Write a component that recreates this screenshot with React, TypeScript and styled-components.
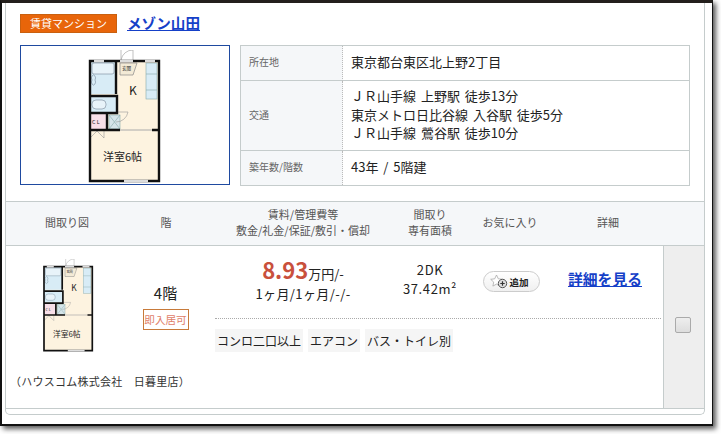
import React from 'react'
import styled, { createGlobalStyle } from 'styled-components'

const GlobalStyle = createGlobalStyle`
  html, body {
    margin: 0;
    padding: 0;
    background: #fff;
    font-family: 'Noto Sans CJK JP', 'Noto Sans', sans-serif;
  }
`

const Screen = styled.div`
  width: 721px;
  height: 434px;
  overflow: hidden;
`

const Window = styled.div`
  box-sizing: border-box;
  width: 713px;
  height: 426px;
  padding: 0 7px 0 3px;
  background: #fff;
  border-top: 3px solid #231f1c;
  border-left: 2px solid #111;
  border-right: 1px solid #111;
  border-bottom: 2px solid #111;
  box-shadow: 3px 3px 5px rgba(0, 0, 0, 0.65);
`

const Panel = styled.div`
  box-sizing: border-box;
  width: 700px;
  height: 412px;
  background: #fff;
  border: 1px solid #c5cccc;
  border-top: 0;
  border-radius: 0 0 5px 5px;
`

const Summary = styled.section`
  box-sizing: border-box;
  height: 198px;
  padding: 10px 14px 0;
`

const TitleRow = styled.div`
  display: flex;
  align-items: center;
  gap: 10px;
  height: 20px;
  margin-bottom: 12px;
`

const TypeBadge = styled.span`
  box-sizing: border-box;
  width: 97px;
  height: 19px;
  background: #e8650a;
  border: 1px solid #c9600f;
  color: #fff;
  font-size: 11px;
  line-height: 17px;
  text-align: center;
`

const NameLink = styled.a`
  color: #1540c8;
  font-size: 14.6px;
  font-weight: 700;
  line-height: 20px;
  text-decoration: underline;
`

const SummaryBody = styled.div`
  display: flex;
  gap: 10px;
`

const PlanBox = styled.div`
  box-sizing: border-box;
  width: 210px;
  height: 140px;
  padding-top: 4px;
  border: 1px solid #1f4aa0;
  display: flex;
  justify-content: center;
  overflow: hidden;
`

const InfoTable = styled.div`
  box-sizing: border-box;
  width: 450px;
  height: 141px;
  border: 1px solid #c5cccc;
  display: grid;
  grid-template-columns: 102px 1fr;
  grid-template-rows: 35px 70px 34px;
`

const InfoLabel = styled.div<{ $last?: boolean }>`
  display: flex;
  align-items: center;
  padding: 0 0 3px 8px;
  background: #f5f7f9;
  color: #666;
  font-size: 10px;
  border-right: 1px dotted #bbb;
  border-bottom: ${props => (props.$last ? '0' : '1px solid #c5cccc')};
`

const InfoValue = styled.div<{ $last?: boolean }>`
  display: flex;
  flex-direction: column;
  justify-content: center;
  padding: 0 0 1px 8px;
  color: #222;
  font-size: 13px;
  line-height: 18.5px;
  word-spacing: 2px;
  border-bottom: ${props => (props.$last ? '0' : '1px solid #c5cccc')};
`

const HeadRow = styled.div`
  display: flex;
  height: 43px;
  background: #f5f7f9;
  border-top: 1px solid #c5cccc;
  border-bottom: 1px solid #c5cccc;
`

const HeadCell = styled.div<{ $width: number }>`
  box-sizing: border-box;
  width: ${props => props.$width}px;
  padding-bottom: 3px;
  display: flex;
  align-items: center;
  justify-content: center;
  color: #555;
  font-size: 11px;
  line-height: 16px;
  text-align: center;
`

const BodyRow = styled.div`
  display: flex;
  height: 162px;
  border-bottom: 1px solid #c5cccc;
`

const PlanColumn = styled.div`
  box-sizing: border-box;
  flex: none;
  width: 120px;
  padding: 13px 0 0 10px;
  display: flex;
  flex-direction: column;
`

const SmallPlan = styled.div`
  width: 63px;
  margin-left: 21px;
  height: 95px;
`

const Company = styled.div`
  margin-top: 20px;
  margin-left: -6px;
  width: 190px;
  color: #333;
  font-size: 11px;
  letter-spacing: 0.25px;
  line-height: 14px;
  white-space: nowrap;
`

const FloorColumn = styled.div`
  box-sizing: border-box;
  flex: none;
  width: 78px;
  padding: 37px 0 0 1px;
  display: flex;
  flex-direction: column;
  align-items: center;
  gap: 6px;
`

const FloorText = styled.div`
  color: #222;
  font-size: 15px;
  line-height: 20px;
`

const MoveInBadge = styled.div`
  box-sizing: border-box;
  width: 46px;
  height: 21px;
  border: 1px solid #c77a3a;
  color: #e0806a;
  font-size: 10.6px;
  line-height: 19px;
  text-align: center;
`

const MainColumn = styled.div`
  box-sizing: border-box;
  flex: none;
  width: 457px;
  padding-left: 11px;
`

const MainTop = styled.div`
  display: flex;
  height: 72px;
  border-bottom: 1px dotted #aaa;
`

const PriceCell = styled.div`
  box-sizing: border-box;
  width: 176px;
  padding-top: 10px;
  text-align: center;
  color: #222;
`

const PriceLine = styled.div`
  height: 26px;
  line-height: 26px;
  font-size: 13px;
`

const PriceValue = styled.span`
  color: #c9503c;
  font-size: 22px;
  font-weight: 700;
`

const TermsLine = styled.div`
  margin-top: 2px;
  font-size: 13px;
  letter-spacing: 0.4px;
  line-height: 20px;
`

const SizeCell = styled.div`
  width: 78px;
  padding-top: 15px;
  text-align: center;
  color: #222;
  font-size: 13px;
  letter-spacing: 0.6px;
  line-height: 18.5px;
  white-space: nowrap;
`

const FavCell = styled.div`
  width: 82px;
  padding: 25px 0 0 1px;
  display: flex;
  justify-content: center;
`

const FavButton = styled.button`
  box-sizing: border-box;
  width: 57px;
  height: 21px;
  padding: 0 0 0 6px;
  display: flex;
  align-items: center;
  gap: 1px;
  background: linear-gradient(#fff, #f0f0f0);
  border: 1px solid #ccc;
  border-radius: 11px;
  color: #222;
  font-family: inherit;
  font-size: 9.6px;
  font-weight: 700;
`

const DetailCell = styled.div`
  width: 106px;
  padding-top: 20px;
  text-align: center;
`

const DetailLink = styled.a`
  color: #1540c8;
  font-size: 14.8px;
  font-weight: 700;
  line-height: 22px;
  text-decoration: underline;
`

const TagRow = styled.div`
  display: flex;
  gap: 5px;
  margin-top: 10px;
`

const Tag = styled.span`
  height: 23px;
  padding: 0 2px;
  background: #f5f5f5;
  color: #222;
  font-size: 12px;
  line-height: 23px;
  white-space: nowrap;
`

const CheckColumn = styled.div`
  box-sizing: border-box;
  flex: none;
  width: 41px;
  margin-left: 2px;
  padding: 0 2px 4px 0;
  background: #eee;
  border-left: 1px solid #c5cccc;
  display: flex;
  align-items: center;
  justify-content: center;
`

const CheckBox = styled.span`
  box-sizing: border-box;
  width: 16px;
  height: 16px;
  border: 1px solid #aaa;
  border-radius: 2px;
  background: linear-gradient(#eee, #ddd);
`

const FloorPlan = ({ width }: { width: number }) => (
  <svg width={width} height={(width * 135) / 90} viewBox="0 0 90 135" style={{ display: 'block' }}>
    <rect x="10" y="11" width="69" height="120" fill="#fdf3e0" />
    <rect x="10" y="11" width="26" height="33" fill="#d8ecf6" />
    <rect x="10" y="47" width="26" height="15" fill="#d8ecf6" />
    <rect x="10" y="64" width="17" height="15" fill="#f8dfe8" />
    <rect x="29" y="65" width="11" height="14" fill="#d5e5ea" stroke="#8aa" strokeWidth="0.6" />
    <path d="M29 65l11 14M40 65l-11 14" stroke="#8aa" strokeWidth="0.6" />
    <rect x="66" y="13" width="11" height="36" fill="#d8ecf6" stroke="#8aa" strokeWidth="0.6" />
    <path d="M66 24h11M66 40h11" stroke="#8aa" strokeWidth="0.6" />
    <rect x="12" y="13" width="22" height="11" rx="2" fill="#e8f3f9" stroke="#789" strokeWidth="0.6" />
    <rect x="12" y="50" width="14" height="9" rx="4" fill="#e8f3f9" stroke="#789" strokeWidth="0.6" />
    <path d="M12 30a2 3 0 1 1 3 0a2 3 0 1 1-3 0" fill="none" stroke="#789" strokeWidth="0.6" />
    <path d="M41 0v10M53 0v10M41 10A12 12 0 0 1 53 0" fill="none" stroke="#999" strokeWidth="0.6" />
    <path d="M40 13h17l-4 12h-13z" fill="#f3ead6" stroke="#888" strokeWidth="0.7" />
    <path d="M36 62h12a12 12 0 0 1-12 10" fill="none" stroke="#999" strokeWidth="0.6" />
    <path d="M10 81v7l7-7M17 81l7 7v-7" fill="none" stroke="#999" strokeWidth="0.6" />
    <path
      d="M10 11v120h69V11ZM36 11v33M10 46h27v17H10M27 63v17M10 80h30M72 80h7"
      fill="none"
      stroke="#111"
      strokeWidth="2.4"
    />
    <path d="M40 80h32" stroke="#aaa" strokeWidth="1" />
    <path d="M14 11h10M40 11h13M65 11h10M44 131h24" stroke="#ddd" strokeWidth="2.4" />
    <text x="42" y="20" fontSize="4.6" fill="#222">玄関</text>
    <text x="49" y="45" fontSize="12" fill="#222">K</text>
    <text x="12" y="74" fontSize="5.4" letterSpacing="1.2" fill="#222">CL</text>
    <text x="23" y="111" fontSize="11" fill="#222">洋室6帖</text>
  </svg>
)

const FavIcon = () => (
  <svg width="19" height="15" viewBox="0 0 19 15">
    <path
      d="M6.5 1l1.8 3.8 4 .5-3 2.8.8 4-3.6-2-3.6 2 .8-4-3-2.8 4-.5z"
      fill="#fff"
      stroke="#aaa"
      strokeWidth="0.8"
    />
    <circle cx="12.5" cy="9.5" r="4.2" fill="#ddd" stroke="#555" strokeWidth="1" />
    <path d="M10.3 9.5h4.4M12.5 7.3v4.4" stroke="#333" strokeWidth="1.2" />
  </svg>
)

const App = () => (
  <Screen>
    <GlobalStyle />
    <Window>
      <Panel>
        <Summary>
          <TitleRow>
            <TypeBadge>賃貸マンション</TypeBadge>
            <NameLink href="#">メゾン山田</NameLink>
          </TitleRow>
          <SummaryBody>
            <PlanBox>
              <FloorPlan width={90} />
            </PlanBox>
            <InfoTable>
              <InfoLabel>所在地</InfoLabel>
              <InfoValue>東京都台東区北上野2丁目</InfoValue>
              <InfoLabel>交通</InfoLabel>
              <InfoValue>
                <div>ＪＲ山手線 上野駅 徒歩13分</div>
                <div>東京メトロ日比谷線 入谷駅 徒歩5分</div>
                <div>ＪＲ山手線 鶯谷駅 徒歩10分</div>
              </InfoValue>
              <InfoLabel $last>築年数/階数</InfoLabel>
              <InfoValue $last>43年 / 5階建</InfoValue>
            </InfoTable>
          </SummaryBody>
        </Summary>
        <HeadRow>
          <HeadCell $width={122}>間取り図</HeadCell>
          <HeadCell $width={76}>階</HeadCell>
          <HeadCell $width={198}>
            賃料/管理費等
            <br />
            敷金/礼金/保証/敷引・償却
          </HeadCell>
          <HeadCell $width={56}>
            間取り
            <br />
            専有面積
          </HeadCell>
          <HeadCell $width={104}>お気に入り</HeadCell>
          <HeadCell $width={92}>詳細</HeadCell>
        </HeadRow>
        <BodyRow>
          <PlanColumn>
            <SmallPlan>
              <FloorPlan width={63} />
            </SmallPlan>
            <Company>（ハウスコム株式会社　日暮里店）</Company>
          </PlanColumn>
          <FloorColumn>
            <FloorText>4階</FloorText>
            <MoveInBadge>即入居可</MoveInBadge>
          </FloorColumn>
          <MainColumn>
            <MainTop>
              <PriceCell>
                <PriceLine>
                  <PriceValue>8.93</PriceValue>万円/-
                </PriceLine>
                <TermsLine>1ヶ月/1ヶ月/-/-</TermsLine>
              </PriceCell>
              <SizeCell>
                2DK
                <br />
                37.42m²
              </SizeCell>
              <FavCell>
                <FavButton>
                  <FavIcon />
                  追加
                </FavButton>
              </FavCell>
              <DetailCell>
                <DetailLink href="#">詳細を見る</DetailLink>
              </DetailCell>
            </MainTop>
            <TagRow>
              <Tag>コンロ二口以上</Tag>
              <Tag>エアコン</Tag>
              <Tag>バス・トイレ別</Tag>
            </TagRow>
          </MainColumn>
          <CheckColumn>
            <CheckBox />
          </CheckColumn>
        </BodyRow>
      </Panel>
    </Window>
  </Screen>
)

export default App
